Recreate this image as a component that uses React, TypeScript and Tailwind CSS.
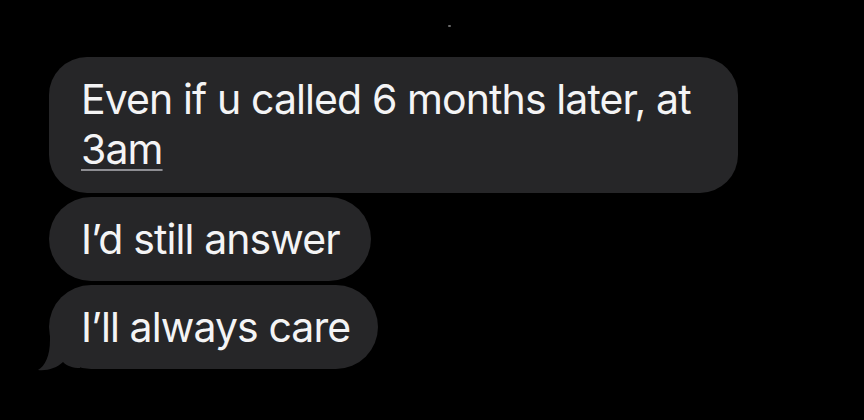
export default function App() {
  const font = { fontFamily: 'Inter, "Noto Sans", "Liberation Sans", sans-serif' }
  return (
    <div className="relative h-[420px] w-[864px] overflow-hidden bg-black" style={font}>
      {/* faint speck near top */}
      <div className="absolute left-[448px] top-[25px] h-[2px] w-[3px] rounded-full bg-[#6b6b6b]" />
      <div className="flex flex-col items-start gap-[4px] pl-[49px] pt-[57px]">
        <div className="w-[689px] whitespace-nowrap rounded-[38px] bg-[#262628] pb-[19px] pl-[32px] pt-[17px] text-[41px] leading-[50px] tracking-[-0.9px] text-[#f4f4f5]">
          Even if u called 6 months later, at
          <br />
          <span className="underline decoration-[#8d8d92] decoration-2 underline-offset-[5px]">3am</span>
        </div>
        <div className="w-[322px] rounded-[42px] bg-[#262628] py-[17px] pl-[32px] text-[41px] leading-[50px] tracking-[-0.9px] text-[#f4f4f5]">
          I’d still answer
        </div>
        <div className="relative w-[329px] rounded-[42px] bg-[#262628] py-[17px] pl-[32px] text-[41px] leading-[50px] tracking-[-0.9px] text-[#f4f4f5]">
          <svg className="absolute left-[-14px] top-[35px]" width="45" height="52" viewBox="0 0 45 52">
            <path d="M15 0 L15 20 C15 36 10 46 3 50 C12 51 22 48 28 42 C32 46 38 48 45 48 L45 0 Z" fill="#262628" />
          </svg>
          <span className="relative">I’ll always care</span>
        </div>
      </div>
    </div>
  )
}
